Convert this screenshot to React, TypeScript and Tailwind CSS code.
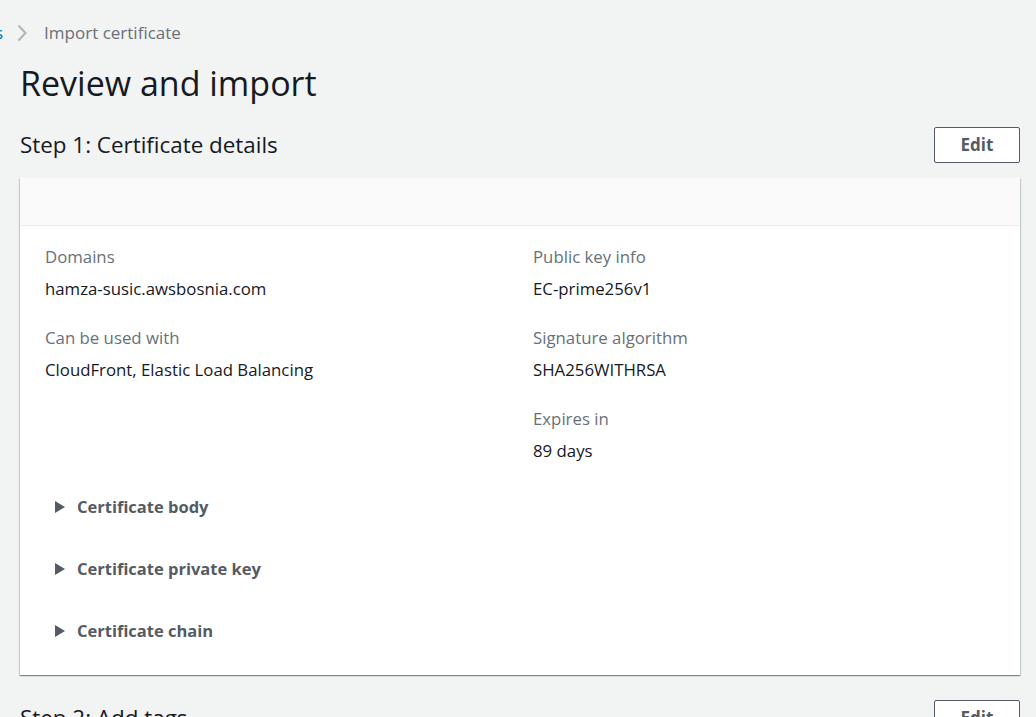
import React from "react";

const font = { fontFamily: '"Open Sans", "Noto Sans", Arial, sans-serif' };

function Tri() {
  return (
    <svg width="10" height="12" viewBox="0 0 10 12" className="shrink-0">
      <path d="M0 0 L10 6 L0 12 Z" fill="#545b64" />
    </svg>
  );
}

function Field({ label, value }: { label: string; value: string }) {
  return (
    <div className="flex flex-col">
      <div className="text-[16.8px] leading-[24px] text-[#687078]">{label}</div>
      <div className="mt-[8px] text-[16.8px] leading-[24px] text-[#16191f]">{value}</div>
    </div>
  );
}

function EditBtn() {
  return (
    <button className="w-[86px] h-[36px] border border-[#545b64] rounded-[2px] bg-white text-[17px] font-bold text-[#545b64]">
      Edit
    </button>
  );
}

export default function App() {
  return (
    <div className="w-[1036px] h-[717px] overflow-hidden bg-[#f2f3f3]" style={font}>
      <div className="flex items-center h-[24px] mt-[21px] text-[17px] leading-[24px]">
        <span className="text-[#0073bb] ml-[-5px]">s</span>
        <svg width="12" height="20" viewBox="0 0 12 20" className="ml-[13px] mr-[16px]">
          <path d="M2.5 2.5 L9.5 10 L2.5 17.5" stroke="#aab7b8" strokeWidth="2" fill="none" />
        </svg>
        <span className="text-[#687078]">Import certificate</span>
      </div>
      <div className="pl-[20px] pr-[16px]">
        <h1 className="text-[34px] leading-[40px] text-[#16191f] mt-[18px]">Review and import</h1>
        <div className="flex items-center justify-between mt-[24px] h-[36px]">
          <h2 className="text-[22.4px] leading-[30px] text-[#16191f]">Step 1: Certificate details</h2>
          <EditBtn />
        </div>
        <div className="mt-[15px] bg-white shadow-[0_1px_1px_0_rgba(0,28,36,0.3),1px_1px_1px_0_rgba(0,28,36,0.15),-1px_1px_1px_0_rgba(0,28,36,0.15)]">
          <div className="h-[48px] bg-[#fafafa] border-b border-[#eaeded]" />
          <div className="px-[25px] pt-[19px] pb-[32px]">
            <div className="grid grid-cols-[488px_1fr]">
              <div className="flex flex-col gap-[25px]">
                <Field label="Domains" value="hamza-susic.awsbosnia.com" />
                <Field label="Can be used with" value="CloudFront, Elastic Load Balancing" />
              </div>
              <div className="flex flex-col gap-[25px]">
                <Field label="Public key info" value="EC-prime256v1" />
                <Field label="Signature algorithm" value="SHA256WITHRSA" />
                <Field label="Expires in" value="89 days" />
              </div>
            </div>
            <div className="flex flex-col gap-[38px] mt-[32px] pl-[10px]">
              {["Certificate body", "Certificate private key", "Certificate chain"].map((t) => (
                <div key={t} className="flex items-center h-[24px]">
                  <Tri />
                  <span className="ml-[12px] text-[16.5px] font-bold text-[#545b64]">{t}</span>
                </div>
              ))}
            </div>
          </div>
        </div>
        <div className="flex items-center justify-between mt-[25px] h-[36px]">
          <h2 className="text-[22.4px] leading-[30px] text-[#16191f]">Step 2: Add tags</h2>
          <EditBtn />
        </div>
      </div>
    </div>
  );
}
